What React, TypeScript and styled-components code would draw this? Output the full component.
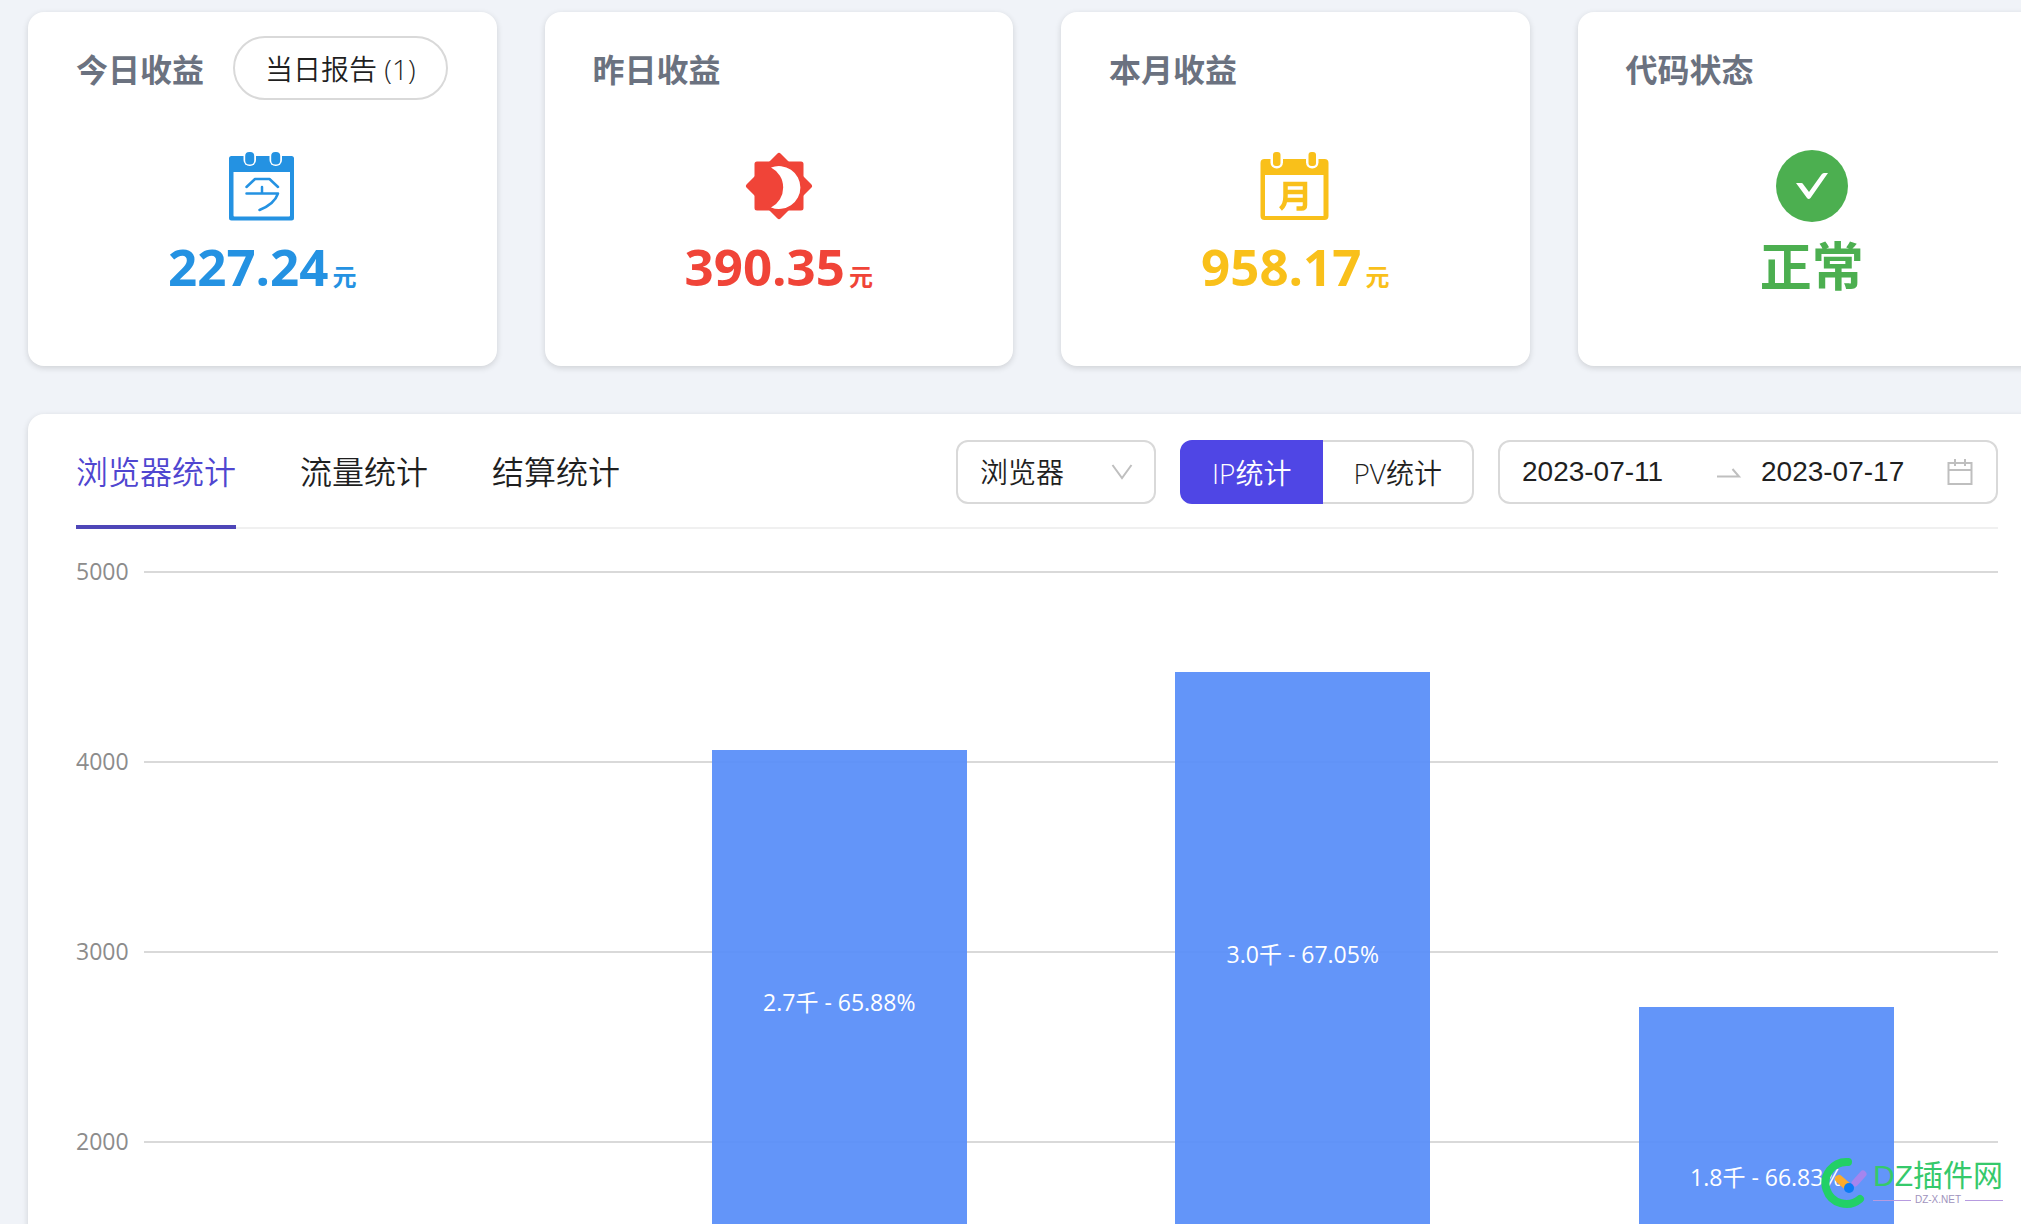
import React, { useState } from 'react';
import styled, { createGlobalStyle } from 'styled-components';

const GlobalStyle = createGlobalStyle`
  *, *::before, *::after { box-sizing: border-box; }
  body {
    margin: 0;
    background: #f0f3f8;
    color: #1f1f1f;
    font-family: 'Open Sans', 'Noto Sans CJK SC', sans-serif;
    font-size: 28px;
    font-weight: 350;
  }
  button, input, select { font: inherit; color: inherit; }
`;

const Page = styled.main`
  position: relative;
  height: 100vh;
  overflow: hidden;
  padding: 12px 0 0 28px;
`;

/* The dashboard is slightly wider than the viewport and runs off its right edge. */
const Dashboard = styled.div`
  display: flex;
  flex-direction: column;
  gap: 48px;
  margin-right: -25px;
`;

const StatGrid = styled.section`
  display: grid;
  grid-template-columns: repeat(4, 1fr);
  gap: 48px;
`;

const Surface = styled.article`
  background: #fff;
  border-radius: 16px;
  box-shadow: 0 2px 6px rgba(0, 0, 0, 0.14);
`;

const StatCard = styled(Surface)`
  display: flex;
  flex-direction: column;
  height: 354px;
  padding: 24px 48px;
`;

const StatHeader = styled.header`
  display: flex;
  align-items: center;
  gap: 29px;
  height: 64px;
`;

const StatTitle = styled.h2`
  margin: 0;
  padding-top: 4px;
  font-size: 32px;
  line-height: 48px;
  font-weight: 700;
  color: #6b7280;
  white-space: nowrap;
`;

const ReportButton = styled.button`
  height: 64px;
  padding: 0 30px;
  border: 2px solid #d9d9d9;
  border-radius: 32px;
  background: #fff;
  white-space: nowrap;
  cursor: pointer;
`;

const StatBody = styled.div<{ $tone: string }>`
  display: flex;
  flex-direction: column;
  align-items: center;
  padding-top: 50px;
  color: ${(p) => p.$tone};
`;

const StatIcon = styled.svg`
  display: block;
  width: 72px;
  height: 72px;
`;

const StatValue = styled.p<{ $numeric: boolean }>`
  display: flex;
  align-items: baseline;
  gap: 4px;
  margin: 8px 0 0;
  font-size: ${(p) => (p.$numeric ? 51 : 52)}px;
  line-height: 72px;
  font-weight: 700;
`;

const Unit = styled.span`
  font-size: 24px;
`;

const Panel = styled(Surface)`
  padding: 0 48px;
`;

const Toolbar = styled.div`
  display: flex;
  justify-content: space-between;
  height: 115px;
  border-bottom: 2px solid #f0f0f0;
`;

const Tabs = styled.nav`
  display: flex;
  gap: 64px;
`;

const Tab = styled.button<{ $active: boolean }>`
  height: 115px;
  padding: 0;
  border: 0;
  border-bottom: 4px solid ${(p) => (p.$active ? '#4e46b8' : 'transparent')};
  background: none;
  font-size: 32px;
  color: ${(p) => (p.$active ? '#4f46d0' : '#1f1f1f')};
  cursor: pointer;
`;

const Filters = styled.div`
  display: flex;
  gap: 24px;
  padding-top: 26px;
`;

const SelectBox = styled.label`
  display: grid;
  width: 200px;
  height: 64px;
`;

const Select = styled.select`
  grid-area: 1 / 1;
  appearance: none;
  padding: 0 22px;
  border: 2px solid #d9d9d9;
  border-radius: 12px;
  background: #fff;
`;

const SelectArrow = styled.svg`
  grid-area: 1 / 1;
  align-self: center;
  justify-self: end;
  width: 24px;
  height: 24px;
  margin-right: 22px;
  pointer-events: none;
`;

const Segmented = styled.div`
  display: flex;
`;

const Segment = styled.button<{ $active: boolean }>`
  height: 64px;
  padding: 0 30px;
  border: 2px solid ${(p) => (p.$active ? '#4f46e5' : '#d9d9d9')};
  background: ${(p) => (p.$active ? '#4f46e5' : '#fff')};
  color: ${(p) => (p.$active ? '#fff' : '#1f1f1f')};
  white-space: nowrap;
  cursor: pointer;

  &:first-child { border-radius: 12px 0 0 12px; }
  &:last-child { border-left-width: 0; border-radius: 0 12px 12px 0; }
`;

const DateRange = styled.div`
  display: flex;
  align-items: center;
  width: 500px;
  height: 64px;
  padding: 0 22px;
  border: 2px solid #d9d9d9;
  border-radius: 12px;
`;

const DateInput = styled.input`
  flex: 1;
  min-width: 0;
  padding: 0;
  border: 0;
  outline: 0;
  background: none;
  font-family: 'Liberation Sans', Arial, sans-serif;
`;

const RangeArrow = styled.svg`
  flex: none;
  width: 28px;
  height: 28px;
  margin: 0 18px 0 8px;
`;

const CalendarIcon = styled.svg`
  flex: none;
  width: 28px;
  height: 28px;
`;

const Chart = styled.figure`
  display: grid;
  grid-template-columns: 68px 1fr;
  margin: 0;
  padding-top: 42px;
`;

const GridLines = styled.div`
  grid-area: 1 / 1 / 2 / 3;
`;

const GridRow = styled.div`
  display: grid;
  grid-template-columns: 51px 1fr;
  column-gap: 17px;
  height: 190px;
  align-items: start;

  &::after {
    content: '';
    height: 2px;
    background: #d9d9d9;
  }
`;

const Tick = styled.span`
  margin-top: -16px;
  font-size: 23px;
  line-height: 32px;
  font-weight: 400;
  color: #8c8c8c;
`;

const Plot = styled.div`
  grid-area: 1 / 2;
  display: grid;
  grid-template-columns: repeat(4, 1fr);
  align-items: end;
  justify-items: center;
  height: 950px;
`;

const Bar = styled.div`
  width: 55%;
  background: rgba(91, 143, 249, 0.95);
`;

const BarLabel = styled.div`
  display: flex;
  align-items: center;
  justify-content: center;
  padding-bottom: 4px;
  font-size: 23px;
  line-height: 32px;
  font-weight: 400;
  color: #fff;
  white-space: nowrap;
`;

const Watermark = styled.aside`
  position: absolute;
  right: 18px;
  bottom: 14px;
  display: flex;
  align-items: center;
  gap: 5px;
  font-family: 'Liberation Sans', 'Noto Sans CJK SC', sans-serif;
  font-weight: 400;
`;

const WatermarkLogo = styled.svg`
  width: 48px;
  height: 54px;
`;

const WatermarkText = styled.div`
  display: flex;
  flex-direction: column;
  font-size: 30px;
  line-height: 34px;
  color: #35c96b;
`;

const WatermarkSite = styled.small`
  display: flex;
  align-items: center;
  gap: 4px;
  font-size: 10px;
  line-height: 14px;
  color: #a093bd;

  &::before, &::after {
    content: '';
    flex: 1;
    height: 1px;
    background: #b79be0;
  }
`;

const TodayIcon = () => (
  <StatIcon viewBox="0.5 0 72 72" aria-hidden="true">
    <path
      fill="currentColor"
      fillRule="evenodd"
      d="M6 6h60q2.500 0 2.500 2.500v59.500q0 2.500-2.500 2.500H6q-2.500 0-2.500-2.500V8.500Q3.500 6 6 6ZM8 22v43.500q0 1 1 1h54.500q1 0 1-1V22Z"
    />
    <rect x="18" y="-2" width="12.500" height="18" rx="6" fill="#fff" />
    <rect x="44" y="-2" width="12.500" height="18" rx="6" fill="#fff" />
    <rect x="19.700" y="2" width="9" height="12.500" rx="4" fill="currentColor" />
    <rect x="45.700" y="2" width="9" height="12.500" rx="4" fill="currentColor" />
    <path
      fill="none"
      stroke="currentColor"
      strokeWidth="2.500"
      strokeLinecap="round"
      strokeLinejoin="round"
      d="M21 37l8.500-8H44l8.500 8M36.500 37v6M21 43.500h31.500Q49 54 34 60"
    />
  </StatIcon>
);

const YesterdayIcon = () => (
  <StatIcon viewBox="0 0 72 72" aria-hidden="true">
    <g fill="currentColor" stroke="currentColor" strokeWidth="5" strokeLinejoin="round">
      <rect x="14" y="14" width="44" height="44" />
      <path d="M36 5.500 66.500 36 36 66.500 5.500 36Z" />
    </g>
    <path fill="#fff" d="M28 17.500A21.500 21.500 0 1 1 28 57.500A22.500 22.500 0 0 0 28 17.500Z" />
  </StatIcon>
);

const MonthIcon = () => (
  <StatIcon viewBox="0.5 0 72 72" aria-hidden="true">
    <path
      fill="currentColor"
      fillRule="evenodd"
      d="M6 9h60q4 0 4 4v53q0 4-4 4H6q-4 0-4-4V13q0-4 4-4ZM6.500 25v41h58.500V25Z"
    />
    <rect x="12" y="-4" width="12.500" height="22.500" rx="6" fill="#fff" />
    <rect x="47.500" y="-4" width="12.500" height="22.500" rx="6" fill="#fff" />
    <rect x="14.500" y="2" width="7.500" height="14" rx="3" fill="currentColor" />
    <rect x="50" y="2" width="7.500" height="14" rx="3" fill="currentColor" />
    <path
      fill="none"
      stroke="currentColor"
      strokeWidth="4.500"
      d="M22 59Q27 55 27 46V34H46.500V55Q46.500 58.500 43 58.500H38M27 42H46M26.500 50H46"
    />
  </StatIcon>
);

const NormalIcon = () => (
  <StatIcon viewBox="0 0 72 72" aria-hidden="true">
    <circle cx="36" cy="36" r="36" fill="currentColor" />
    <path
      fill="#fff"
      d="M20 33h5.500q1 0 1.500 1l6 8L45.500 24.500q1-1.500 2.500-1.500h4L34.500 48q-1.800 2-3.500 0Z"
    />
  </StatIcon>
);

const stats = [
  { title: '今日收益', report: '当日报告 (1)', value: '227.24', unit: '元', tone: '#2492e2', Icon: TodayIcon },
  { title: '昨日收益', value: '390.35', unit: '元', tone: '#f04438', Icon: YesterdayIcon },
  { title: '本月收益', value: '958.17', unit: '元', tone: '#f9c01a', Icon: MonthIcon },
  { title: '代码状态', value: '正常', tone: '#4caf50', Icon: NormalIcon },
];

const tabs = ['浏览器统计', '流量统计', '结算统计'];
const metrics = ['IP统计', 'PV统计'];
const ticks = [5000, 4000, 3000, 2000];
const axisMax = 5000;

const bars = [
  { total: 0, share: 0, label: '' },
  { total: 4058, share: 65.88, label: '2.7千 - 65.88%' },
  { total: 4471, share: 67.05, label: '3.0千 - 67.05%' },
  { total: 2706, share: 66.83, label: '1.8千 - 66.83%' },
];

export default function App() {
  const [tab, setTab] = useState(tabs[0]);
  const [metric, setMetric] = useState(metrics[0]);

  return (
    <Page>
      <GlobalStyle />
      <Dashboard>
        <StatGrid>
          {stats.map(({ title, report, value, unit, tone, Icon }) => (
            <StatCard key={title}>
              <StatHeader>
                <StatTitle>{title}</StatTitle>
                {report && <ReportButton type="button">{report}</ReportButton>}
              </StatHeader>
              <StatBody $tone={tone}>
                <Icon />
                <StatValue $numeric={Boolean(unit)}>
                  {value}
                  {unit && <Unit>{unit}</Unit>}
                </StatValue>
              </StatBody>
            </StatCard>
          ))}
        </StatGrid>

        <Panel as="section">
          <Toolbar>
            <Tabs>
              {tabs.map((name) => (
                <Tab key={name} type="button" $active={name === tab} onClick={() => setTab(name)}>
                  {name}
                </Tab>
              ))}
            </Tabs>
            <Filters>
              <SelectBox>
                <Select aria-label="浏览器" defaultValue="浏览器">
                  <option>浏览器</option>
                </Select>
                <SelectArrow viewBox="0 0 24 24" aria-hidden="true">
                  <path d="M2.500 5 12 18 21.500 5" fill="none" stroke="#bfbfbf" strokeWidth="2" />
                </SelectArrow>
              </SelectBox>
              <Segmented>
                {metrics.map((name) => (
                  <Segment
                    key={name}
                    type="button"
                    $active={name === metric}
                    onClick={() => setMetric(name)}
                  >
                    {name}
                  </Segment>
                ))}
              </Segmented>
              <DateRange>
                <DateInput aria-label="开始日期" defaultValue="2023-07-11" />
                <RangeArrow viewBox="0 0 28 28" aria-hidden="true">
                  <path d="M2 18.500H24L17.500 11" fill="none" stroke="#bfbfbf" strokeWidth="2" />
                </RangeArrow>
                <DateInput aria-label="结束日期" defaultValue="2023-07-17" />
                <CalendarIcon viewBox="0 0 28 28" aria-hidden="true">
                  <path
                    d="M2.500 5H25.500V26H2.500ZM2.500 12H25.500M9 1V8M19 1V8"
                    fill="none"
                    stroke="#bfbfbf"
                    strokeWidth="2"
                  />
                </CalendarIcon>
              </DateRange>
            </Filters>
          </Toolbar>

          <Chart>
            <GridLines>
              {ticks.map((t) => (
                <GridRow key={t}>
                  <Tick>{t}</Tick>
                </GridRow>
              ))}
            </GridLines>
            <Plot>
              {bars.map((b, i) => (
                <Bar key={i} style={{ height: `${(b.total / axisMax) * 100}%` }}>
                  {b.label && <BarLabel style={{ height: `${b.share}%` }}>{b.label}</BarLabel>}
                </Bar>
              ))}
            </Plot>
          </Chart>
        </Panel>
      </Dashboard>

      <Watermark>
        <WatermarkLogo viewBox="0 0 48 54" aria-hidden="true">
          <path
            d="M28 6A21 21 0 1 0 40 43"
            fill="none"
            stroke="#22d066"
            strokeWidth="8"
            strokeLinecap="round"
          />
          <path d="M35 27l8-9" stroke="#a585ee" strokeWidth="7" strokeLinecap="round" />
          <path d="M19 23l8 7" stroke="#fbab2c" strokeWidth="8" strokeLinecap="round" />
          <circle cx="29" cy="32" r="5" fill="#0a7bf5" />
        </WatermarkLogo>
        <WatermarkText>
          <span>DZ插件网</span>
          <WatermarkSite>DZ-X.NET</WatermarkSite>
        </WatermarkText>
      </Watermark>
    </Page>
  );
}
